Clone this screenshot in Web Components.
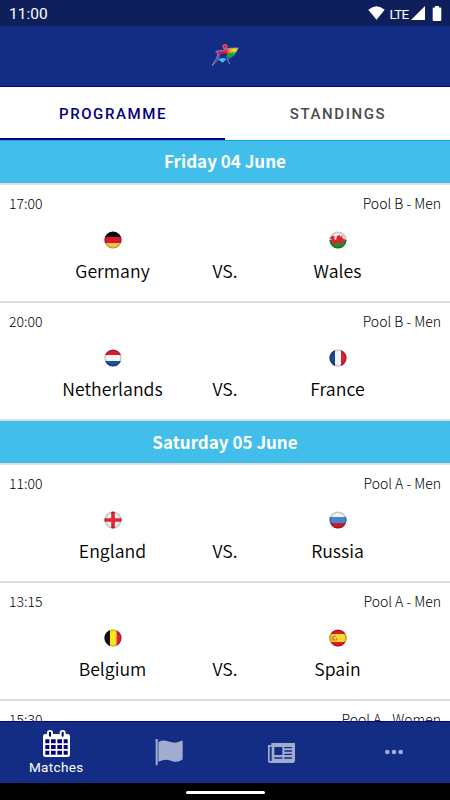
<!DOCTYPE html>
<html lang="en">
<head>
<meta charset="utf-8">
<meta name="viewport" content="width=device-width, initial-scale=1">
<title>Matches</title>
<style>
html, body {
  margin: 0;
  height: 100%;
  overflow: hidden;
}

body {
  background: #fff;
  font-family: "Noto Sans CJK SC", "Noto Sans", sans-serif;
}
</style>
</head>
<body>
<match-app></match-app>

<script>
const attach = (element, html) => {
  element.attachShadow({ mode: "open" });
  const template = document.createElement("template");
  template.innerHTML = html;
  element.shadowRoot.appendChild(template.content.cloneNode(true));
};

class StatusBar extends HTMLElement {
  constructor() {
    super();
    attach(this, `
<style>
:host {
  align-items: center;
  background: #0e1f5b;
  box-sizing: border-box;
  color: #fff;
  display: flex;
  flex: none;
  font: 15.5px/26px Roboto, sans-serif;
  height: 26px;
  justify-content: space-between;
  padding: 2px 8px 0 9px;
}

.icons {
  align-items: center;
  display: flex;
  margin-top: -2px;
}

.network {
  font-size: 13.5px;
  letter-spacing: -0.7px;
  margin: 1px 2.5px 0 4px;
}

svg {
  display: block;
  fill: #fff;
}

.battery {
  margin-left: 7px;
}
</style>
<span>11:00</span>
<div class="icons">
  <svg width="17" height="14" viewBox="0 0 17 14"><path d="M.3 3.8Q8.5-3.2 16.7 3.8L8.5 13.8z"/></svg>
  <span class="network">LTE</span>
  <svg width="14" height="14" viewBox="0 0 14 14"><path d="M14 0v14H0z"/></svg>
  <svg class="battery" width="10" height="15" viewBox="0 0 10 15"><path d="M3 0h4v1.6h1.3q1 0 1 1V14q0 1-1 1H1.7q-1 0-1-1V2.6q0-1 1-1H3z"/></svg>
</div>`);
  }
}
customElements.define("status-bar", StatusBar);

class AppHeader extends HTMLElement {
  constructor() {
    super();
    attach(this, `
<style>
:host {
  align-items: center;
  background: #132d85;
  border-bottom: 1px solid #000080;
  box-sizing: border-box;
  display: flex;
  flex: none;
  height: 61px;
  justify-content: center;
}
</style>
<svg width="28" height="26" viewBox="0 0 28 26">
  <defs>
    <linearGradient id="wing" x1="0" y1="0" x2="1" y2="0">
      <stop offset="0" stop-color="#5b3fae"/>
      <stop offset=".14" stop-color="#d61a4e"/>
      <stop offset=".45" stop-color="#ee1c25"/>
      <stop offset=".62" stop-color="#f79a1c"/>
      <stop offset=".8" stop-color="#f4ea1c"/>
      <stop offset="1" stop-color="#9acb2b"/>
    </linearGradient>
    <linearGradient id="body" x1="1" y1="0" x2="0" y2="1">
      <stop offset="0" stop-color="#d8e01e"/>
      <stop offset=".45" stop-color="#18a34a"/>
      <stop offset="1" stop-color="#16807a"/>
    </linearGradient>
  </defs>
  <path d="M5 8.5 12.5 7.5 18 5.5 27.4 5 25 9.5 16.5 10.5 12.5 10.5 8 11z" fill="url(#wing)"/>
  <path d="M16 10.5Q21 9.5 26 7.5L22.5 13 18 16 15.2 15z" fill="url(#body)"/>
  <path d="M6.5 9.5 9.5 11 8.8 15.5 5.8 17z" fill="#7b429f"/>
  <path d="M7.5 16.5Q11 13.4 15.5 16.3L11.5 19.7z" fill="#44bfe8"/>
  <path d="M4.8 8.3 7 11.3 5.7 15 1.2 22.5 7.8 16M4.8 8.3 13 7.2 18 5.3 27.4 5M16.5 15.5Q16.8 19.2 19 21" fill="none" stroke="#b6add9" stroke-width=".7"/>
  <circle cx="14" cy="3.6" r="2.2" fill="#ed1c2c" stroke="#d7a9c6" stroke-width=".6"/>
</svg>`);
  }
}
customElements.define("app-header", AppHeader);

class AppTab extends HTMLElement {
  constructor() {
    super();
    attach(this, `
<style>
:host {
  border-bottom: 2px solid transparent;
  box-sizing: border-box;
  color: #4c4c4c;
  flex: 1;
  font: 500 15px/51px Roboto, sans-serif;
  height: 53px;
  letter-spacing: 1.6px;
  padding: 2px 0 0 1px;
  text-align: center;
}

:host([active]) {
  border-bottom-color: #000080;
  color: #000080;
}
</style>
<slot></slot>`);
  }
}
customElements.define("app-tab", AppTab);

class DateHeader extends HTMLElement {
  constructor() {
    super();
    attach(this, `
<style>
:host {
  background: #41beea;
  border-bottom: 2px solid #dedede;
  box-sizing: border-box;
  color: #fff;
  display: block;
  font-size: 17px;
  font-weight: bold;
  height: 44.7px;
  line-height: 42px;
  text-align: center;
}
</style>
<slot></slot>`);
  }
}
customElements.define("date-header", DateHeader);

const FLAGS = {
  germany: `<path fill="#050505" d="M0 0h18v6H0z"/><path fill="#dc0a25" d="M0 6h18v6H0z"/><path fill="#f3c43c" d="M0 12h18v6H0z"/>`,
  wales: `<path fill="#f1f1f1" d="M0 0h18v9H0z"/><path fill="#168a2c" d="M0 9h18v9H0z"/>
    <path fill="#e1141f" d="M1 7 4 4.5 6 6 5 8 7 9 8 5 11 4 11 6 14 4 13 7 17 8.5 14 9 16 12 13 11 13 14 11 12 8 11 6 14 4 13 5 11 2 12 3 9z"/>`,
  netherlands: `<path fill="#d8162b" d="M0 0h18v6H0z"/><path fill="#f4f4f4" d="M0 6h18v6H0z"/><path fill="#194b9d" d="M0 12h18v6H0z"/>`,
  france: `<path fill="#173a91" d="M0 0h6v18H0z"/><path fill="#f4f4f4" d="M6 0h6v18H6z"/><path fill="#d8162b" d="M12 0h6v18h-6z"/>`,
  england: `<path fill="#efefef" d="M0 0h18v18H0z"/><path fill="#dc1c2e" d="M7.2 0h3.6v18H7.2z"/><path fill="#dc1c2e" d="M0 7.2h18v3.6H0z"/>`,
  russia: `<path fill="#f1f1f1" d="M0 0h18v6H0z"/><path fill="#397fce" d="M0 6h18v6H0z"/><path fill="#c81424" d="M0 12h18v6H0z"/>`,
  belgium: `<path fill="#070707" d="M0 0h6v18H0z"/><path fill="#fbe90a" d="M6 0h6.5v18H6z"/><path fill="#dc1830" d="M12.5 0H18v18h-5.5z"/>`,
  spain: `<path fill="#d81628" d="M0 0h18v18H0z"/><path fill="#fbd51e" d="M0 5h18v8H0z"/><path fill="#d8642c" d="M2.8 7.5h1v4h-1zM7 9h1v2.5H7zM4.4 6.5h2v5h-2z"/><path fill="#eed2b0" d="M5 8h1.5v2H5z"/>`,
};

class TeamFlag extends HTMLElement {
  connectedCallback() {
    attach(this, `
<style>
:host {
  display: block;
  height: 18px;
  width: 18px;
}

svg {
  display: block;
}
</style>
<svg width="18" height="18" viewBox="0 0 18 18">
  <defs>
    <clipPath id="disc"><circle cx="9" cy="9" r="8.6"/></clipPath>
    <radialGradient id="shade">
      <stop offset=".7" stop-color="#000" stop-opacity="0"/>
      <stop offset="1" stop-color="#000" stop-opacity=".35"/>
    </radialGradient>
    <linearGradient id="shine" x1="0" y1="0" x2="0" y2="1">
      <stop offset="0" stop-color="#fff" stop-opacity="0"/>
      <stop offset=".5" stop-color="#fff" stop-opacity=".06"/>
      <stop offset="1" stop-color="#fff" stop-opacity="0"/>
    </linearGradient>
  </defs>
  <g clip-path="url(#disc)">
    ${FLAGS[this.getAttribute("country")]}
    <path fill="url(#shine)" d="M0 0h18v18H0z"/>
    <circle cx="9" cy="9" r="9" fill="url(#shade)"/>
  </g>
</svg>`);
  }
}
customElements.define("team-flag", TeamFlag);

class MatchRow extends HTMLElement {
  connectedCallback() {
    const home = this.getAttribute("home");
    const away = this.getAttribute("away");
    const teams = home && away ? `
<div class="teams">
  <div class="team"><team-flag country="${home.toLowerCase()}"></team-flag><span>${home}</span></div>
  <span>VS.</span>
  <div class="team"><team-flag country="${away.toLowerCase()}"></team-flag><span>${away}</span></div>
</div>` : "";
    attach(this, `
<style>
:host {
  background: #fff;
  border-bottom: 2px solid #dedede;
  box-sizing: border-box;
  color: #000;
  display: block;
  height: 118px;
  padding: 8px 9px 0;
}

.info {
  display: flex;
  font-size: 14px;
  font-weight: 300;
  justify-content: space-between;
  line-height: 20px;
}

.teams {
  align-items: end;
  display: grid;
  font-size: 17.7px;
  font-weight: 350;
  grid-template-columns: repeat(3, 112.5px);
  justify-content: center;
  line-height: 26px;
  margin-top: 18px;
  text-align: center;
}

.team {
  align-items: center;
  display: flex;
  flex-direction: column;
  gap: 8px;
}
</style>
<div class="info">
  <span>${this.getAttribute("time")}</span>
  <span>${this.getAttribute("pool")}</span>
</div>
${teams}`);
  }
}
customElements.define("match-row", MatchRow);

class NavItem extends HTMLElement {
  constructor() {
    super();
    attach(this, `
<style>
:host {
  align-items: center;
  color: #a2abd0;
  display: flex;
  flex: 1;
  flex-direction: column;
  font: 13.5px/17px Roboto, sans-serif;
  gap: 2px;
  justify-content: center;
  letter-spacing: 0.35px;
}

:host([active]) {
  color: #fff;
}

::slotted(svg) {
  display: block;
  fill: currentColor;
}
</style>
<slot name="icon"></slot>
<slot></slot>`);
  }
}
customElements.define("nav-item", NavItem);

class BottomNav extends HTMLElement {
  constructor() {
    super();
    attach(this, `
<style>
:host {
  background: #132d85;
  border-top: 1px solid #000080;
  box-sizing: border-box;
  display: flex;
  flex: none;
  height: 62px;
}
</style>
<nav-item active>
  <svg slot="icon" width="27" height="27" viewBox="0 0 81 81">
    <path fill="#000080" d="M6 27h69v47H6z"/>
    <path fill-rule="evenodd" d="M6 12h6V8q0-8 9-8t9 8v4h20V8q0-8 9-8t9 8v4h6q7 0 7 7v55q0 7-7 7H7q-7 0-7-7V19q0-7 6-7zM7 28v12h12V28zm17 0v12h14V28zm19 0v12h14V28zm19 0v12h12V28zM7 45v12h12V45zm17 0v12h14V45zm19 0v12h14V45zm19 0v12h12V45zM7 62v12h12V62zm17 0v12h14V62zm19 0v12h14V62zm19 0v12h12V62z"/>
    <path fill="#000080" d="M18 7q0-2 3-2t3 2v11q0 2-3 2t-3-2zM56 7q0-2 3-2t3 2v11q0 2-3 2t-3-2z"/>
  </svg>
  Matches
</nav-item>
<nav-item><svg slot="icon" width="28" height="27" viewBox="0 0 84 81">
    <path d="M1 4q0-4 4-4t4 4l-1 4v69q0 2-3 2t-3-2V8z"/>
    <path d="M10 9Q24 2 36 6t22 5q9 0 21-6 4-1 4 3v51q0 3-4 5-12 6-22 4Q46 63 34 62q-11 0-24 6z"/>
  </svg></nav-item>
<nav-item><svg slot="icon" width="27" height="20" viewBox="0 0 81 60">
    <path fill-rule="evenodd" d="M10 0h71v53q0 7-7 7H7q-7 0-7-7V6h10zM5 11v41q0 3 3 3t3-3V11zm12-4v45h58V7z"/>
    <path fill-rule="evenodd" d="M15 5h61v50H15zM19 12v24h24V12zm30 0v4h23v-4zm0 10v4h23v-4zm0 10v4h23v-4zM19 43v4h24v-4zm30 0v4h23v-4z"/>
  </svg></nav-item>
<nav-item><svg slot="icon" width="18" height="8" viewBox="0 0 54 24">
    <circle cx="7" cy="9" r="7"/><circle cx="27" cy="9" r="7"/><circle cx="47" cy="9" r="7"/>
  </svg></nav-item>`);
  }
}
customElements.define("bottom-nav", BottomNav);

class SystemBar extends HTMLElement {
  constructor() {
    super();
    attach(this, `
<style>
:host {
  align-items: center;
  background: #000;
  box-sizing: border-box;
  display: flex;
  flex: none;
  height: 17px;
  justify-content: center;
  padding-top: 1px;
}

.handle {
  background: #fff;
  border-radius: 2px;
  height: 3px;
  width: 79px;
}
</style>
<div class="handle"></div>`);
  }
}
customElements.define("system-bar", SystemBar);

class MatchApp extends HTMLElement {
  constructor() {
    super();
    attach(this, `
<style>
:host {
  display: flex;
  flex-direction: column;
  height: 100vh;
}

.tabs {
  display: flex;
  flex: none;
}

main {
  flex: 1;
  min-height: 0;
  overflow: hidden;
}

main > :first-child {
  box-shadow: inset 0 1px #12a3d6;
}
</style>
<status-bar></status-bar>
<app-header></app-header>
<div class="tabs">
  <app-tab active>PROGRAMME</app-tab>
  <app-tab>STANDINGS</app-tab>
</div>
<main>
  <date-header>Friday 04 June</date-header>
  <match-row time="17:00" pool="Pool B - Men" home="Germany" away="Wales"></match-row>
  <match-row time="20:00" pool="Pool B - Men" home="Netherlands" away="France"></match-row>
  <date-header>Saturday 05 June</date-header>
  <match-row time="11:00" pool="Pool A - Men" home="England" away="Russia"></match-row>
  <match-row time="13:15" pool="Pool A - Men" home="Belgium" away="Spain"></match-row>
  <match-row time="15:30" pool="Pool A - Women"></match-row>
</main>
<bottom-nav></bottom-nav>
<system-bar></system-bar>`);
  }
}
customElements.define("match-app", MatchApp);
</script>
</body>
</html>
